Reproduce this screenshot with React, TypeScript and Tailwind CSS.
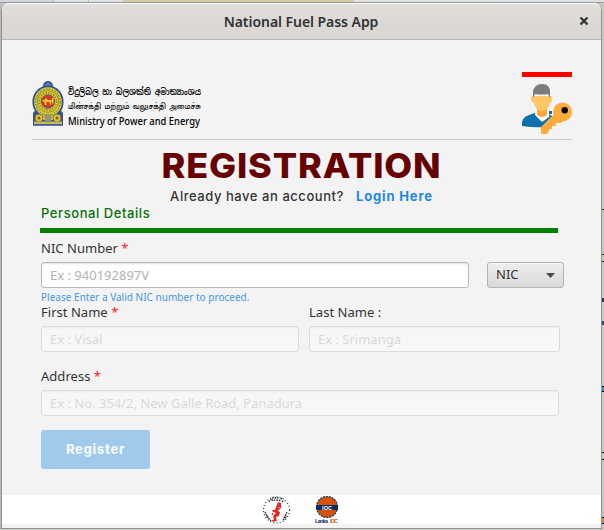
import React from "react";

function Emblem() {
  return (
    <svg width="32" height="46" viewBox="0 0 32 46" className="-mt-px block shrink-0">
      <circle cx="16" cy="6" r="5" fill="#3c5a9c" />
      <circle cx="16" cy="6" r="2.6" fill="#8a9a9a" />
      <circle cx="16" cy="6" r="1.2" fill="#26407f" />
      <ellipse cx="16" cy="22" rx="15.6" ry="16.5" fill="#34519a" />
      <ellipse cx="16" cy="22" rx="13.8" ry="14.7" fill="#dccb35" />
      <ellipse cx="16" cy="22" rx="12.3" ry="13" fill="none" stroke="#4c5a55" strokeWidth="1" strokeDasharray="1.5 1.5" />
      <circle cx="16" cy="21.5" r="10.8" fill="#e4d024" stroke="#6f6d3b" strokeWidth=".7" />
      <circle cx="16" cy="21.5" r="8.6" fill="none" stroke="#837a31" strokeWidth="1.5" strokeDasharray="1.4 1.3" />
      <circle cx="16" cy="21.5" r="6.8" fill="#cf3a2a" stroke="#45588c" strokeWidth=".8" />
      <path d="M10.5 20h2l1-2 2.5 2h4v-2h1.500v5.500h-1.500v-2h-1v3h-1.500v-2.500h-3v3h-2v-3.500h-2z" fill="#f0cd28" />
      <path d="M1 45V33q2-4 6 0l3 4h12l3-4q4-4 6 0v12z" fill="#34519a" />
      <path d="M8 36h16l-2 4H10z" fill="#d5c343" />
      <circle cx="7" cy="38" r="4" fill="#e0c722" stroke="#4b5060" strokeWidth=".7" />
      <circle cx="25" cy="38" r="4" fill="#e0c722" stroke="#4b5060" strokeWidth=".7" />
      <circle cx="7" cy="38" r="1.500" fill="#85512d" />
      <circle cx="25" cy="38" r="1.500" fill="#85512d" />
      <path d="M12 34h8l-1 7h-6z" fill="#98956f" />
      <path d="M2 41.500h28v3H2z" fill="#c4bd5c" />
      <path d="M1 45h30" stroke="#34519a" strokeWidth="1.500" />
    </svg>
  );
}

function UserKey() {
  return (
    <svg width="50" height="50" viewBox="0 0 50 50" className="block">
      <path d="M0 42v-4q1-5 7-7l6-2h13l8 6-9 8q-13 1-25-1z" fill="#0c70ae" />
      <path d="M14 26l-1 5 7 7 7-5 1-6z" fill="#fff" />
      <path d="M15 24v7q5 4 10 0v-7z" fill="#f7a83b" />
      <path d="M10 12q-2 2 0 6l2 1q1 7 8 8 7-1 8-8l2-2q1-4-1-5z" fill="#ffc768" />
      <path d="M11 14V8q1-8 9-8 8 0 8 8v6l-2-4q-6 1-13 0z" fill="#7b7b7b" />
      <path d="M27 27h3v3h-3z" fill="#0c70ae" />
      <circle cx="40.500" cy="28" r="9.500" fill="#ffab3d" />
      <path d="M31 31L19 43v7h6l2-3v-2h3v-3h4v-3h5l3-3z" fill="#ffab3d" />
      <circle cx="42.700" cy="26.300" r="3.200" fill="#000" />
    </svg>
  );
}

function CeypetcoLogo() {
  return (
    <svg width="29" height="28" viewBox="0 0 29 28" className="block">
      <circle cx="14.500" cy="14" r="13" fill="none" stroke="#333" strokeWidth="1.200" strokeDasharray="1 2.200" />
      <path d="M7 6l2-3M10 5l1-4M12 5l2-4M15 5l1-4M17 5l3-3M20 6l2-2M3 16l3 6M5 20l4 5M22 22l3-6M21 24l4-4" stroke="#333" strokeWidth="1.300" strokeDasharray="1.800 .7" fill="none" />
      <path d="M16 6l3 1v4h-2l-1 4 2 1-1 4-3 1 1 4-5 1 2-2-1-4 3-3-3-1-1-2h3z" fill="#dd2a25" />
      <path d="M16 14l3-3M11 17l-1 2M12 24l-2 1" stroke="#dd2a25" strokeWidth="1.200" />
    </svg>
  );
}

function IocLogo() {
  return (
    <svg width="24" height="28" viewBox="0 0 24 28" className="block">
      <circle cx="12" cy="11" r="10.500" fill="#d85203" stroke="#15376b" strokeWidth="1.300" strokeDasharray="2 1" />
      <path d="M1 9h22v5H1z" fill="#0d2d69" />
      <text x="12" y="13.500" textAnchor="middle" className="fill-white font-['Liberation_Sans',sans-serif] text-[5.500px] font-bold">IOC</text>
      <text x="0" y="27" textLength="13" className="fill-[#0d2d69] font-['Liberation_Sans',sans-serif] text-[5.500px] font-bold">Lanka</text>
      <text x="15" y="27" textLength="8" className="fill-[#d85203] font-['Liberation_Sans',sans-serif] text-[5.500px] font-bold">IOC</text>
    </svg>
  );
}

function Label({ children, required }: { children: React.ReactNode; required?: boolean }) {
  return (
    <div className="h-[18px] text-[13px] leading-[18px] tracking-[0.03px] text-[#333]">
      {children}
      {required && <span className="text-[#ff2020]"> *</span>}
    </div>
  );
}

function Field({ hint, width, disabled }: { hint: string; width: string; disabled?: boolean }) {
  return (
    <input
      placeholder={hint}
      disabled={disabled}
      className={`block h-[26px] rounded-[3px] border border-[#b9b9b9] bg-white px-2 text-[13px] shadow-[inset_0_2px_2px_-1px_#ddd] placeholder:text-[#b2b2b2] disabled:opacity-40 ${width}`}
    />
  );
}

export default function App() {
  return (
    <div className="flex h-[530px] w-[604px] flex-col overflow-hidden bg-[#c6c6c2] font-['Noto_Sans',sans-serif]">
      <div className="flex h-[3px] shrink-0 border-b border-[#9a9a98] bg-[#dfe1e3]">
        <div className="w-[53px] bg-[#d4d6d9]" />
        <div className="w-9 border-x border-[#bbb]" />
        <div className="w-[34px]" />
        <div className="w-[231px] bg-[#d6cda6]" />
      </div>
      <div className="flex min-h-0 flex-1">
        <div className="w-px bg-[#b7b8b5]" />
        <main className="mb-px flex w-[601px] flex-col rounded-t-[8px] border-x border-b border-[#929292] bg-[#f3f3f3]">
          <header className="flex h-[37px] shrink-0 items-center rounded-t-[7px] border-b border-t border-b-[#bdb8b1] border-t-white bg-linear-to-b from-[#e1dedb] to-[#d9d5d0] pl-[21px] pr-3">
            <h1 className="flex-1 text-center text-[14px] font-semibold tracking-[-0.05px] text-[#2e3436]">National Fuel Pass App</h1>
            <svg width="10" height="10" viewBox="0 0 10 10" className="-mt-px">
              <path d="M1.500 1.500l7 7m0-7l-7 7" stroke="#2e3436" strokeWidth="2.300" />
            </svg>
          </header>
          <section className="ml-[30px] mr-[29px] flex h-[100px] shrink-0 justify-between border-b border-[#cbcbcb]">
            <div className="flex gap-1 pt-[41px]">
              <Emblem />
              <div className="flex w-[134px] flex-col pt-[3px] text-black">
                <svg width="134" height="46" className="block overflow-visible font-['Noto_Sans_Sinhala','Noto_Sans_Tamil','Noto_Sans',sans-serif]">
                  <text x="0" y="11" textLength="133" lengthAdjust="spacingAndGlyphs" className="text-[9px] font-semibold">විදුලිබල හා බලශක්ති අමාත්‍යාංශය</text>
                  <text x="0" y="25" textLength="133" lengthAdjust="spacingAndGlyphs" className="text-[8px] font-medium">மின்சக்தி மற்றும் வலுசக்தி அமைச்சு</text>
                  <text x="0" y="41" textLength="132" lengthAdjust="spacingAndGlyphs" className="font-['Noto_Sans',sans-serif] text-[10px] font-medium">Ministry of Power and Energy</text>
                </svg>
              </div>
            </div>
            <div className="flex w-[50px] flex-col gap-[7px] pt-8">
              <div className="h-[5px] bg-[#fe0000]" />
              <UserKey />
            </div>
          </section>
          <div className="h-[48px] shrink-0 scale-x-[1.045] whitespace-nowrap pt-[5px] text-center font-['Inter',sans-serif] text-[34.500px] font-extrabold leading-[42px] tracking-[0.8px] text-[#670000]">REGISTRATION</div>
          <div className="flex h-[17px] shrink-0 justify-center gap-[12px] font-['Inter',sans-serif] text-[13px] leading-4">
            <span className="font-medium tracking-[0.550px] text-[#333]">Already have an account?</span>
            <a className="font-bold tracking-[0.850px] text-[#1e88e5]">Login Here</a>
          </div>
          <div className="flex flex-col pl-[39px]">
            <h2 className="h-4 font-['Inter',sans-serif] text-[13px] font-medium leading-4 tracking-[0.570px] text-[#087108]">Personal Details</h2>
            <div className="-ml-px mb-[6px] mt-[7px] h-[5px] w-[518px] bg-[#008000]" />
            <Label required>NIC Number</Label>
            <div className="mt-[5px] flex gap-[18px]">
              <Field hint="Ex : 940192897V" width="w-[428px]" />
              <button className="flex h-[26px] w-[77px] items-center justify-between rounded-[3px] border border-[#b3b3b3] bg-linear-to-b from-[#eee] to-[#d9d9d9] pl-2 pr-2 text-[13px] text-[#333] shadow-[inset_0_1px_#f8f8f8]">
                NIC
                <svg width="9" height="5" viewBox="0 0 9 5"><path d="M0 0h9L4.500 5z" fill="#4c4c4c" /></svg>
              </button>
            </div>
            <p className="mt-[2px] h-[14px] text-[10px] leading-[14px] tracking-[0.02px] text-[#4698e6]">Please Enter a Valid NIC number to proceed.</p>
            <div className="-mt-px flex gap-[10px]">
              <div className="flex flex-col gap-[5px]">
                <Label required>First Name</Label>
                <Field hint="Ex : Visal" width="w-[258px]" disabled />
              </div>
              <div className="flex flex-col gap-[5px]">
                <Label>Last Name :</Label>
                <Field hint="Ex : Srimanga" width="w-[251px]" disabled />
              </div>
            </div>
            <div className="mt-[15px] flex flex-col gap-[5px]">
              <Label required>Address</Label>
              <Field hint="Ex : No. 354/2, New Galle Road, Panadura" width="w-[518px]" disabled />
            </div>
            <button className="mt-[14px] h-[39px] w-[109px] rounded-[3px] bg-[#9fcaec] font-['Inter',sans-serif] text-[13px] font-extrabold tracking-[0.650px] text-[#f3f8fc]">Register</button>
          </div>
          <footer className="mb-1 mt-auto flex h-[29px] items-center justify-center gap-[24px] bg-white pr-[2px]">
            <CeypetcoLogo />
            <IocLogo />
          </footer>
        </main>
        <div className="w-[2px] bg-[#c9c9c4] pt-[206px]">
          <div className="h-px bg-[#222]" />
          <div className="mt-[44px] h-2 border-y border-[#222]" />
          <div className="mt-[36px] h-1 bg-[#34304d]" />
          <div className="mt-[19px] h-1 bg-[#28516e]" />
          <div className="mt-[61px] h-[6px] border-y border-black bg-[#3e91c7]" />
          <div className="mt-[60px] h-[8px] border-y border-black" />
          <div className="mt-[57px] h-[7px] border-y border-black bg-[#cf8a43]" />
        </div>
      </div>
    </div>
  );
}
